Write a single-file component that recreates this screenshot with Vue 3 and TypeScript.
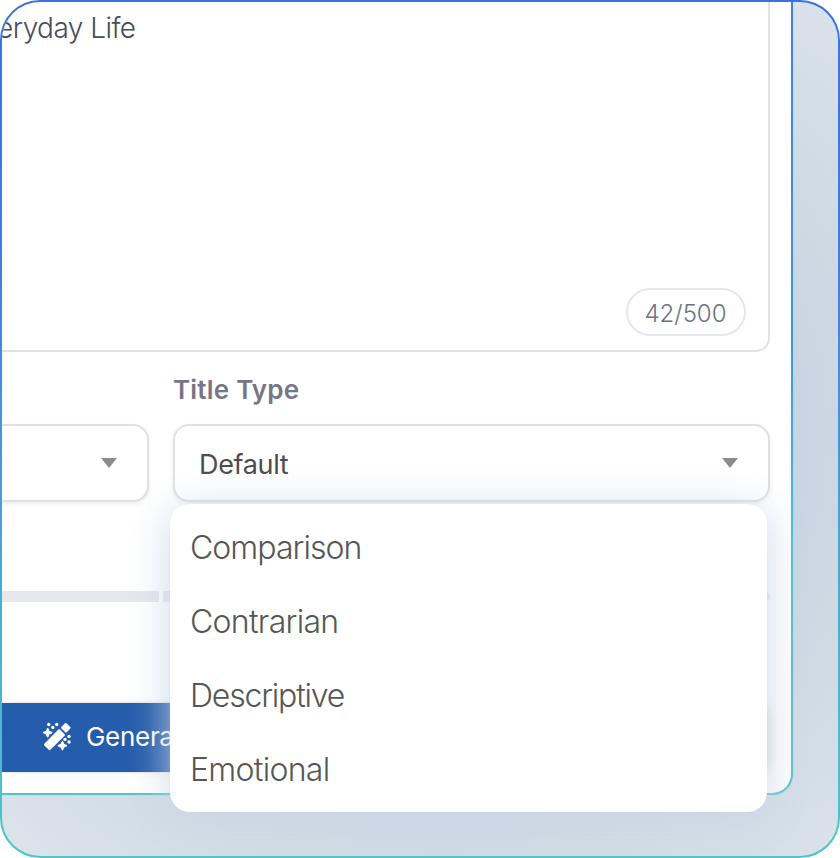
<script setup lang="ts">
const titleTypes: string[] = ['Comparison', 'Contrarian', 'Descriptive', 'Emotional']
const prompt = 'eryday Life'
const used = 42
const limit = 500
</script>

<template>
  <main class="frame">
    <div class="backdrop">
      <section class="panel">
        <div class="panel-body">
          <div class="editor">
            <p class="prompt">{{ prompt }}</p>
            <span class="counter"><span class="counter-text">{{ used }}/{{ limit }}</span></span>
          </div>
          <div class="fields">
            <div class="field">
              <div class="select select-cut">
                <svg class="caret" viewBox="0 0 16 10"><path d="M0 0H16L8 10Z" /></svg>
              </div>
            </div>
            <div class="field field-type">
              <label class="label"><span>Title Type</span></label>
              <div class="select">
                <span class="value">Default</span>
                <svg class="caret" viewBox="0 0 16 10"><path d="M0 0H16L8 10Z" /></svg>
              </div>
              <ul class="menu">
                <li v-for="item in titleTypes" :key="item"><span :class="item.toLowerCase()">{{ item }}</span></li>
              </ul>
            </div>
          </div>
          <div class="track"><span class="segment"></span><span class="segment rest"></span></div>
          <button class="generate" type="button">
            <svg class="wand" viewBox="0 0 30 30" fill="currentColor">
              <g stroke="currentColor" stroke-linejoin="round">
                <path stroke-width="2.4" d="M3.2 22.6L17.2 8.4L21.8 13L7.6 27Z" />
                <path stroke-width="2" d="M23.7 1.9L27.6 5.8L24 9.6L20 5.6Z" />
                <path stroke-width="1.8" d="M5.7 6.9L6.8 9.6L9.5 10.7L6.8 11.8L5.7 14.5L4.6 11.8L1.9 10.7L4.6 9.6Z" />
                <path stroke-width="1.8" d="M20.4 19.9L21.5 22.6L24.2 23.7L21.5 24.8L20.4 27.5L19.3 24.8L16.6 23.7L19.3 22.6Z" />
              </g>
              <circle cx="6.7" cy="2.5" r="1.7" />
              <circle cx="14.7" cy="2.5" r="1.7" />
              <circle cx="10.8" cy="5.5" r="1.7" />
              <circle cx="27" cy="14.4" r="1.7" />
              <circle cx="23" cy="17.4" r="1.7" />
              <circle cx="27" cy="20" r="1.7" />
            </svg>
            <span class="generate-text">Generate</span>
          </button>
        </div>
      </section>
    </div>
  </main>
</template>

<style>
body {
  margin: 0;
  background: #fff;
}
</style>

<style scoped>
* {
  box-sizing: border-box;
}

.frame {
  width: 840px;
  height: 858px;
  padding: 2px;
  border-radius: 40px;
  background: linear-gradient(180deg, #3c70e2 0%, #3f7fdf 30%, #4aaed2 72%, #50c4cb 100%);
  font-family: Inter, "Liberation Sans", sans-serif;
}

.backdrop {
  height: 854px;
  border-radius: 38px;
  overflow: hidden;
  background: radial-gradient(ellipse 640px 590px at 440px 430px, #c4d1e1 45%, #d2dce5 76%, #dce4eb 100%);
}

.panel {
  width: 791px;
  height: 793px;
  padding: 0 2px 2px 0;
  border-radius: 0 0 21px 0;
  background: linear-gradient(180deg, #4180e2 0%, #419ae2 44%, #4bbbd3 67%, #52c2cb 100%);
  box-shadow: 0 0 1px rgba(66, 160, 220, 0.6);
}

.panel-body {
  height: 100%;
  border-radius: 0 0 19px 0;
  background: #fff;
  display: flex;
  flex-direction: column;
  align-items: flex-start;
}

.editor {
  width: 768px;
  height: 350px;
  flex: none;
  border: solid #dfe2e6;
  border-width: 0 2px 2px 0;
  border-radius: 0 0 14px 0;
  padding: 8px 22px 14px 0;
  display: flex;
  flex-direction: column;
  justify-content: space-between;
}

.prompt {
  margin: 0 0 0 -5px;
  font-size: 28px;
  line-height: 36px;
  font-weight: 300;
  letter-spacing: -0.55px;
  color: #474d59;
  white-space: nowrap;
}

.counter {
  align-self: flex-end;
  width: 120px;
  height: 48px;
  padding: 2px 1px 0 0;
  border: 2px solid #e6e7ec;
  border-radius: 24px;
  display: flex;
  align-items: center;
  justify-content: center;
  font-size: 24px;
  font-weight: 300;
  color: #6b7280;
}

.fields {
  width: 768px;
  height: 150px;
  flex: none;
  display: grid;
  grid-template-columns: 147px 597px;
  column-gap: 24px;
}

.field {
  display: flex;
  flex-direction: column;
  justify-content: flex-end;
}

.field-type {
  position: relative;
}

.label {
  flex: 1;
  padding-top: 20px;
  font-size: 26px;
  line-height: 36px;
  font-weight: 600;
  letter-spacing: 0.2px;
  color: #78758a;
}

.select {
  height: 78px;
  flex: none;
  padding: 0 30px 0 24px;
  border: 2px solid #e0e0e1;
  border-radius: 16px;
  background: #fff;
  box-shadow: 0 2px 5px rgba(0, 0, 0, 0.07);
  display: flex;
  align-items: center;
  justify-content: space-between;
}

.select-cut {
  border-left: 0;
  border-radius: 0 16px 16px 0;
  justify-content: flex-end;
}

.value {
  font-size: 27px;
  line-height: 36px;
  letter-spacing: -0.35px;
  color: #4c4c4c;
  padding-top: 3px;
}

.caret {
  width: 16px;
  height: 10px;
  fill: #8c8c8c;
}

.menu {
  position: absolute;
  z-index: 2;
  left: -3px;
  top: 152px;
  width: 597px;
  height: 308px;
  margin: 0;
  padding: 6px 20px;
  list-style: none;
  border-radius: 20px;
  background: #fff;
  box-shadow: 0 6px 40px rgba(201, 213, 230, 0.95);
}

.menu li {
  height: 74px;
  display: flex;
  align-items: center;
  font-size: 32px;
  font-weight: 300;
  color: #565656;
}

.comparison {
  letter-spacing: -0.95px;
}

.contrarian {
  letter-spacing: -0.7px;
}

.descriptive {
  letter-spacing: -1.2px;
}

.emotional {
  letter-spacing: -0.7px;
}

.track {
  width: 768px;
  height: 11px;
  flex: none;
  margin-top: 89px;
  border-radius: 0 6px 6px 0;
  overflow: hidden;
  display: flex;
  gap: 4px;
}

.segment {
  width: 157px;
  background: #e5e7eb;
}

.rest {
  flex: 1;
}

.generate {
  width: 764px;
  height: 69px;
  flex: none;
  margin: 101px 0 0;
  padding: 0 0 2px 40px;
  border: 0;
  border-radius: 0 12px 12px 0;
  background: #255cab;
  box-shadow: 0 0 2px rgba(30, 50, 90, 0.2), 6px 0 8px -2px rgba(30, 50, 90, 0.14);
  display: flex;
  align-items: center;
  gap: 14px;
  color: #fff;
  font: 400 26px/36px Inter, "Liberation Sans", sans-serif;
  letter-spacing: -0.3px;
}

.wand {
  width: 30px;
  height: 30px;
  flex: none;
}
</style>
